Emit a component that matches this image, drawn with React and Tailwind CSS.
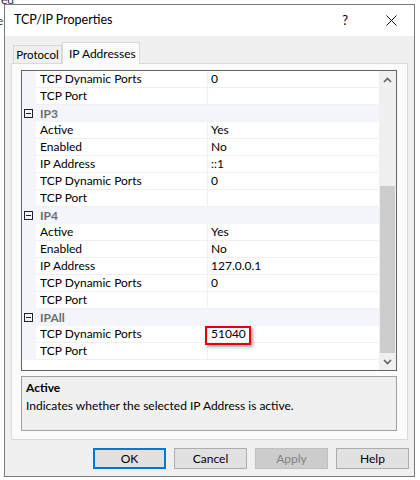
import React from "react";

const ROWS = [
  { name: "TCP Dynamic Ports", value: "0" },
  { name: "TCP Port", value: "" },
  { cat: "IP3" },
  { name: "Active", value: "Yes" },
  { name: "Enabled", value: "No" },
  { name: "IP Address", value: "::1" },
  { name: "TCP Dynamic Ports", value: "0" },
  { name: "TCP Port", value: "" },
  { cat: "IP4" },
  { name: "Active", value: "Yes" },
  { name: "Enabled", value: "No" },
  { name: "IP Address", value: "127.0.0.1" },
  { name: "TCP Dynamic Ports", value: "0" },
  { name: "TCP Port", value: "" },
  { cat: "IPAll" },
  { name: "TCP Dynamic Ports", value: "51040", marked: true },
  { name: "TCP Port", value: "" },
];

function CategoryRow({ label }) {
  return (
    <div className="flex h-[17px] items-center bg-[#f3f5fa]">
      <div className="ml-[2px] flex h-[9px] w-[9px] items-center justify-center border border-[#222]">
        <div className="h-px w-[5px] bg-[#222]" />
      </div>
      <span className="ml-[7px] font-bold text-[#6d6d6d]">{label}</span>
    </div>
  );
}

function PropRow({ name, value, marked }) {
  return (
    <div className="flex h-[17px]">
      <div className="w-[14px] bg-[#f3f5fa]" />
      <div className="w-[171px] border-b border-[#f0f0f0] pl-[4px] leading-[16px]">{name}</div>
      <div className="w-px bg-[#f0f0f0]" />
      <div className="flex-1 border-b border-[#f0f0f0] pl-[3px] leading-[16px]">
        <span className="relative inline-block">
          {value}
          {marked && (
            <span className="absolute left-[-6px] right-[-5px] top-0 h-[19px] border-2 border-[#e8000b] shadow-[2px_2px_3px_rgba(0,0,0,0.35)]" />
          )}
        </span>
      </div>
    </div>
  );
}

function Chevron({ down }) {
  return (
    <svg width="9" height="6" viewBox="0 0 9 6">
      <path
        d={down ? "M1 1 L4.5 4.5 L8 1" : "M1 5 L4.5 1.5 L8 5"}
        fill="none"
        stroke="#606060"
        strokeWidth="1.6"
      />
    </svg>
  );
}

function Button({ children, primary, disabled }) {
  const cls = primary
    ? "border-2 border-[#0078d7] bg-[#e1e1e1] text-black"
    : disabled
    ? "border border-[#bfbfbf] bg-[#cccccc] text-[#838383]"
    : "border border-[#adadad] bg-[#e1e1e1] text-black";
  return (
    <div className={"flex h-[21px] w-[73px] items-center justify-center " + cls}>{children}</div>
  );
}

export default function App() {
  return (
    <div
      className="relative h-[480px] w-[420px] overflow-hidden bg-white text-[12px] text-black"
      style={{ fontFamily: "Lato, 'Liberation Sans', sans-serif" }}
    >
      {/* bits of the window behind */}
      <div className="absolute left-[1px] top-[-9px] text-[#333]">ed</div>
      <div className="absolute left-[-3px] top-[12px] text-[#333]">e</div>

      <div className="relative ml-[4px] mt-[4px] flex h-[473px] w-[411px] flex-col border border-[#7a7a7a] bg-[#f0f0f0]">
        {/* title bar */}
        <div className="flex h-[31px] items-center bg-white pl-[9px]">
          <span className="text-[12.5px]">TCP/IP Properties</span>
          <span className="ml-auto mr-[38px] text-[13px]">?</span>
          <svg width="11" height="11" viewBox="0 0 11 11" className="mr-[17px]">
            <path d="M0.5 0.5 L10.5 10.5 M10.5 0.5 L0.5 10.5" stroke="#111" strokeWidth="1" />
          </svg>
        </div>

        {/* tabs */}
        <div className="mt-[6px] flex items-end pl-[8px]">
          <div className="flex h-[18px] w-[49px] items-center justify-center border border-b-0 border-[#d9d9d9] bg-[#f0f0f0] text-[11.5px]">
            Protocol
          </div>
          <div className="relative z-10 -mb-px flex h-[22px] w-[78px] items-center border border-b-0 border-[#d9d9d9] bg-[#fbfbfb] pl-[6px]">
            IP Addresses
          </div>
        </div>

        {/* tab panel */}
        <div className="ml-[6px] mr-[6px] flex h-[377px] flex-col border border-[#d9d9d9] bg-[#fbfbfb] pl-[9px] pt-[6px]">
          {/* property grid */}
          <div className="flex h-[301px] w-[376px] border border-[#646464] bg-white">
            <div className="flex-1">
              {ROWS.map((r, i) =>
                r.cat ? <CategoryRow key={i} label={r.cat} /> : <PropRow key={i} {...r} />
              )}
            </div>
            <div className="flex w-[17px] flex-col bg-[#f0f0f0]">
              <div className="flex h-[17px] items-center justify-center">
                <Chevron />
              </div>
              <div className="flex flex-1 flex-col justify-end px-[1px]">
                <div className="h-[167px] bg-[#cdcdcd]" />
              </div>
              <div className="flex h-[17px] items-center justify-center">
                <Chevron down />
              </div>
            </div>
          </div>

          {/* help pane */}
          <div className="mt-[5px] h-[55px] w-[376px] border border-[#a0a0a0] bg-[#f0f0f0] pl-[4px] pt-[3px]">
            <div className="font-bold leading-[15px]">Active</div>
            <div className="mt-[3px] leading-[15px]">Indicates whether the selected IP Address is active.</div>
          </div>
        </div>

        {/* buttons */}
        <div className="mt-[8px] flex justify-end gap-[8px] pr-[5px]">
          <Button primary>OK</Button>
          <Button>Cancel</Button>
          <Button disabled>Apply</Button>
          <Button>Help</Button>
        </div>
      </div>
    </div>
  );
}
